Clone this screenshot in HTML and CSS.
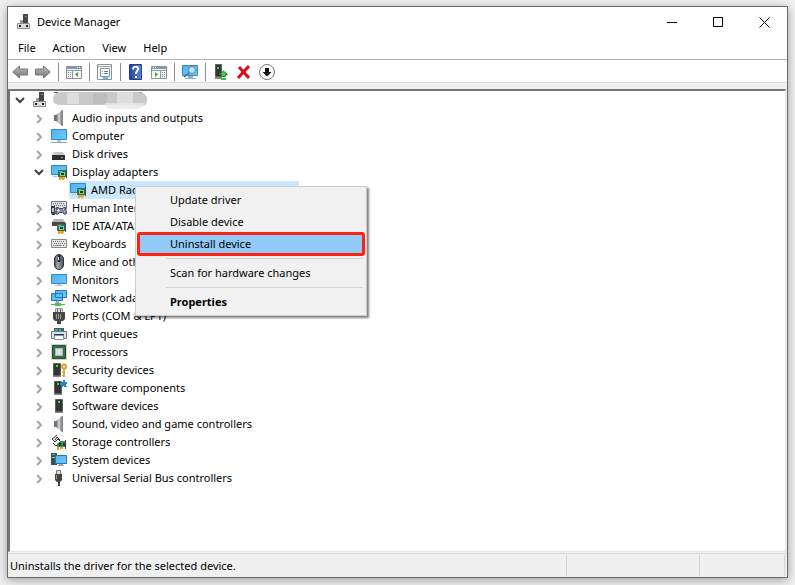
FILE: index.html
```
<!DOCTYPE html>
<html lang="en">
<head>
<meta charset="utf-8">
<title>Device Manager</title>
<link rel="stylesheet" href="styles.css">
</head>
<body>
<svg class="defs" aria-hidden="true">
  <defs>
    <linearGradient id="sky" x1="0" y1="0" x2="1" y2="1"><stop offset="0" stop-color="#4db2f5"/><stop offset="1" stop-color="#6fcaff"/></linearGradient>
    <linearGradient id="cone" x1="0" x2="1"><stop offset="0" stop-color="#666"/><stop offset=".5" stop-color="#d4d8dc"/><stop offset="1" stop-color="#777"/></linearGradient>
    <linearGradient id="arrow" x1="0" y1="0" x2="0" y2="1"><stop offset="0" stop-color="#c0c0c0"/><stop offset="1" stop-color="#747474"/></linearGradient>
    <linearGradient id="book" x1="0" x2="1"><stop offset="0" stop-color="#2342a0"/><stop offset="1" stop-color="#5d82dd"/></linearGradient>
    <linearGradient id="shell" x1="0" x2="1"><stop offset="0" stop-color="#42484e"/><stop offset=".35" stop-color="#a4abb3"/><stop offset="1" stop-color="#4a5057"/></linearGradient>
    <symbol id="i-pc" viewBox="0 0 16 16"><path fill="#474747" d="M7 0h5v9H7z"/><path fill="#34c83c" d="M9 2h2v1H9z"/><path fill="#999" d="M4 6h3v3H4z"/><path fill="#dcdcdc" stroke="#8d8d8d" d="M1.500 9.500h12v5h-12z"/><path fill="#222" d="M3 11h2v2H3zM10 11h2v2h-2z"/></symbol>
    <symbol id="i-sound" viewBox="0 0 16 16"><path fill="#6d7276" d="M3 5h3v6H3z"/><path fill="url(#cone)" d="M5 5l6-5v16l-6-5z"/><path fill="#858b91" d="M11 0h1v16h-1z"/></symbol>
    <symbol id="i-monitor" viewBox="0 0 16 16"><path fill="url(#sky)" stroke="#3688bd" d="M.5 2.500h15v9H.5z"/><path fill="#b9ccd8" d="M6 12h4v1H6zM4 13h8v1H4z"/></symbol>
    <symbol id="i-computer" viewBox="0 0 16 16"><path fill="url(#sky)" stroke="#3688bd" d="M.5 1.500h15v10H.5z"/><path fill="#b3c6d4" d="M6 12h4v2H6z"/><path fill="#87a9c1" d="M0 14h16v1H0z"/></symbol>
    <symbol id="i-disk" viewBox="0 0 16 16"><path fill="#c9c9c9" d="M3 6h9l2 4H1z"/><path fill="#303030" d="M1 9h13v5H1z"/><path fill="#36d83f" d="M10 11h2v1h-2z"/></symbol>
    <symbol id="i-card" viewBox="0 0 10 11"><path fill="#2f7255" d="M1 1h9v7H1z"/><path fill="#6aac87" d="M2 2h3v1H2z"/><path fill="#75cfa0" d="M3 3h5v4H3z"/><path fill="#193d2e" d="M4 4h3v2H4z"/><path fill="#444" d="M9 0h1v9H9z"/><path fill="#f1a21b" d="M2 8h2v3H2zM4 8h4v2H4zM5 8h2v3H5z"/></symbol>
    <symbol id="i-display" viewBox="0 0 16 16"><path fill="url(#sky)" stroke="#3688bd" d="M.5 1.500h15v9H.5z"/><path fill="#a9c7d8" d="M2 12h4v1H2z"/><use href="#i-card" x="6" y="5" width="10" height="11"/></symbol>
    <symbol id="i-hid" viewBox="0 0 16 16"><path fill="#e0e2e5" stroke="#737a83" d="M.5 1.500h15v7H.5z"/><path stroke="#646b73" stroke-dasharray="1 1" d="M2 3.500h12M3 5.500h11"/><path fill="#7b8794" stroke="#3e4955" d="M5.500 7.500h2l1 1h3l1-1h2l1 6-2 1-2-2h-3l-2 2-2-1z"/><path fill="#36414d" d="M0 6h4v9H1l-1-2z"/><path fill="#b8c4d1" d="M1 8h2v4H1z"/><path fill="#dce2ea" d="M7 9h1v3H7zM6 10h3v1H6zM12 9h1v1h-1zM13 11h1v1h-1z"/></symbol>
    <symbol id="i-ide" viewBox="0 0 16 16"><path fill="#b8b8b8" d="M3 1h9l2 3H1z"/><path fill="#494949" d="M1 4h13v4H1z"/><use href="#i-card" x="5" y="5" width="10" height="11"/></symbol>
    <symbol id="i-keyboard" viewBox="0 0 16 16"><path fill="#e6e6e6" stroke="#8a8a8a" d="M.5 3.500h15v8H.5z"/><path stroke="#737373" stroke-dasharray="1 1" d="M2 5.500h12M3 7.500h11M2 9.500h12"/><path stroke="#888" d="M5 9.500h6"/></symbol>
    <symbol id="i-mouse" viewBox="0 0 16 16"><rect x="3.500" y=".5" width="9" height="15" rx="4.500" fill="url(#shell)" stroke="#30363d"/><path stroke="#252c34" stroke-width="3" d="M8 1v7"/><path stroke="#e4e8ec" d="M7.500 3v3"/></symbol>
    <symbol id="i-network" viewBox="0 0 16 16"><path fill="url(#sky)" stroke="#2878ae" d="M4.500.5h11v7h-11zM.5 3.500h11v7H.5z"/><path fill="#9bb0bd" d="M5 11h3v2H5z"/><path fill="#4dba58" d="M0 14h14v1H0zM4 13h6v3H4z"/></symbol>
    <symbol id="i-port" viewBox="0 0 16 16"><path fill="#ddd" stroke="#999" d="M4.500.5h7v4h-7z"/><path stroke="#666" d="M6.500 1v3M9.500 1v3"/><path fill="#484848" d="M2 4h12v7l-2 2H4l-2-2z"/><path stroke="#999" d="M5.500 6v5M7.500 6v5M9.500 6v5"/><path fill="#444" d="M6 13h4v3H6z"/></symbol>
    <symbol id="i-print" viewBox="0 0 16 16"><path fill="#4f5860" d="M3 2h10v4H3z"/><path fill="#15a9dc" d="M4 3h3v2H4z"/><path fill="#38bc65" d="M8 3h2v2H8z"/><path fill="#2864c7" d="M10 3h2v2h-2z"/><path fill="#dce0e3" stroke="#707980" d="M.5 5.500h15v7H.5z"/><path fill="#30373e" d="M3 8h10v2H3z"/><path fill="#fff" stroke="#7698ac" d="M3.500 9.500h9v4h-9z"/></symbol>
    <symbol id="i-cpu" viewBox="0 0 16 16"><path fill="none" stroke="#bca36c" stroke-dasharray="1 1" d="M.5.5h15v15H.5z"/><path fill="#326c4d" stroke="#205238" d="M1.500 1.500h13v13h-13z"/><path fill="#dfdfdf" stroke="#a7bfb0" d="M4.500 4.500h7v7h-7z"/></symbol>
    <symbol id="i-tower" viewBox="0 0 16 16"><path fill="#343434" stroke="#5e5e5e" d="M4.500 1.500h7v12h-7z"/><path fill="#36e144" d="M7 3h2v2H7z"/><path fill="#858585" d="M4 14h8v1H4z"/></symbol>
    <symbol id="i-security" viewBox="0 0 16 16"><use href="#i-tower" x="-2" width="16" height="16"/><circle cx="13" cy="4.500" r="2" fill="none" stroke="#dc9e31" stroke-width="2"/><path fill="#dda340" d="M12 7h2v8h-2zM11 10h1v1h-1zM11 13h1v1h-1z"/></symbol>
    <symbol id="i-component" viewBox="0 0 16 16"><use href="#i-tower" x="-1" width="16" height="16"/><path fill="#2483d5" d="M10 2h2V0h2v2h2v2h-1v2h1v1h-3V6h-1v1h-2V5H9V3h1z"/></symbol>
    <symbol id="i-storage" viewBox="0 0 16 16"><path fill="#ededed" stroke="#333" d="M6 1L1 5l3 3 3-3 2 2"/><path fill="none" stroke="#333" d="M4 6l2-3 3 3M2 9l3 3 2-2"/><path fill="#3c8a60" d="M6 10l3-3h6v6H6z"/><path fill="#193d2e" d="M8 9h2v3H8zM12 9h2v3h-2z"/><path fill="#444" d="M14 6h1v9h-1z"/><path fill="#e4a323" d="M6 13h2v3H6zM9 13h3v2H9z"/></symbol>
    <symbol id="i-system" viewBox="0 0 16 16"><path fill="#424c54" d="M0 1h6v12H0z"/><path fill="#37d646" d="M1 2h3v1H1z"/><path fill="#adb3b7" d="M1 5h3v1H1z"/><path fill="url(#sky)" stroke="#2878ae" d="M4.500 3.500h11v8h-11z"/><path fill="#8ca8b9" d="M8 12h4v1H8zM7 13h6v1H7z"/></symbol>
    <symbol id="i-usb" viewBox="0 0 16 16"><path fill="#e1e1e1" stroke="#777" d="M5.500.5h4v4h-4z"/><path fill="#444" d="M4 4h7v6l-2 2H6l-2-2zM7 12h2v4H7z"/><path stroke="#999" d="M5.500 5v4"/></symbol>
    <symbol id="i-right" viewBox="0 0 10 10"><path fill="none" stroke="#a6a6a6" stroke-width="2" d="M3 1l4 4-4 4"/></symbol>
    <symbol id="i-down" viewBox="0 0 10 10"><path fill="none" stroke="#404040" stroke-width="2" d="M1 2l4 4 4-4"/></symbol>
    <symbol id="t-back" viewBox="0 0 16 16"><path fill="url(#arrow)" stroke="#777" d="M.7 8L7.500 2v3h8v6h-8v3z"/></symbol>
    <symbol id="t-pane" viewBox="0 0 16 16"><path fill="#f5f6f7" stroke="#8a9299" d="M.5 2.500h15v12H.5z"/><path fill="#8a96a3" d="M1 3h14v2H1z"/><path stroke="#fff" d="M11 3.500h1M13 3.500h1"/><path stroke="#929ba4" d="M1 6.500h14M6.500 7v7"/><path stroke="#748ca8" stroke-dasharray="1 1" d="M2 8.500h3M2 10.500h3M2 12.500h3"/><path fill="#3faa36" d="M12 8v5L9 10.500z"/></symbol>
    <symbol id="t-props" viewBox="0 0 16 16"><path fill="#f9fafb" stroke="#899199" d="M.5.5h14v15H.5z"/><path stroke="#9aa3ab" d="M1 2.500h13"/><path fill="#fff" stroke="#8b949d" d="M3.500 4.500h9v8h-9z"/><path stroke="#54aacc" d="M5 7.500h1M5 9.500h1"/><path stroke="#687b8b" d="M7 7.500h4M7 9.500h4"/><path stroke="#4fc3e8" stroke-width="2" d="M6 14h5"/></symbol>
    <symbol id="t-help" viewBox="0 0 14 16"><path fill="url(#book)" stroke="#203d91" d="M.5.5h12v15H.5z"/><path fill="none" stroke="#fff" stroke-width="2" d="M4 5.500C4 1.500 10 2 9 5.500 8.500 7.500 7 7 7 10M7 12v2"/></symbol>
    <symbol id="t-scan" viewBox="0 0 16 16"><path fill="url(#sky)" stroke="#3688bd" d="M.5 1.500h15v10H.5z"/><path fill="#8db1c9" d="M6 12h5v2H6zM3 14h11v1H3z"/><circle cx="10" cy="6" r="3.500" fill="#b9e6ff" stroke="#607f94"/><path stroke="#557488" stroke-width="2" d="M7 9l-5 4"/></symbol>
    <symbol id="t-update" viewBox="0 0 16 16"><path fill="#343434" stroke="#5e5e5e" d="M2.500.5h6v12h-6z"/><path fill="#36e144" d="M4 3h2v2H4z"/><path fill="#858585" d="M2 13h7v2H2z"/><path fill="#45ce50" stroke="#218d2a" d="M10.500 7l4 3.500h-2v2h-4v-2h-2z"/><path fill="#45b84c" d="M8 14h5v2H8z"/></symbol>
    <symbol id="t-delete" viewBox="0 0 16 16"><path stroke="#dc0b14" stroke-width="3" d="M3 3l10 11M13 2L2 14"/></symbol>
    <symbol id="t-disable" viewBox="0 0 16 16"><circle cx="8" cy="8" r="7.500" fill="#fff" stroke="#777"/><path fill="#111" d="M6 4h4v4h2.500L8 12.500 3.500 8H6z"/></symbol>
  </defs>
</svg>
<main class="window">
  <header class="titlebar">
    <svg class="icon"><use href="#i-pc"/></svg>
    <h1 class="title">Device Manager</h1>
    <div class="captions">
      <button class="caption" aria-label="Minimize"><svg class="glyph" viewBox="0 0 11 11"><path d="M0 5.500h10"/></svg></button>
      <button class="caption" aria-label="Maximize"><svg class="glyph" viewBox="0 0 11 11"><path d="M.5.5h9v9h-9z"/></svg></button>
      <button class="caption" aria-label="Close"><svg class="glyph" viewBox="0 0 11 11"><path d="M.5.5l10 10M10.500.5l-10 10"/></svg></button>
    </div>
  </header>
  <nav class="menubar">
    <button>File</button><button>Action</button><button>View</button><button>Help</button>
  </nav>
  <div class="toolbar" role="toolbar">
    <button aria-label="Back"><svg class="icon"><use href="#t-back"/></svg></button>
    <button aria-label="Forward"><svg class="icon flip"><use href="#t-back"/></svg></button>
    <span class="divider"></span>
    <button aria-label="Show console tree"><svg class="icon"><use href="#t-pane"/></svg></button>
    <span class="divider"></span>
    <button aria-label="Properties"><svg class="icon"><use href="#t-props"/></svg></button>
    <span class="divider"></span>
    <button aria-label="Help"><svg class="icon"><use href="#t-help"/></svg></button>
    <button aria-label="Show action pane"><svg class="icon flip"><use href="#t-pane"/></svg></button>
    <span class="divider"></span>
    <button aria-label="Scan for hardware changes"><svg class="icon"><use href="#t-scan"/></svg></button>
    <span class="divider"></span>
    <button aria-label="Update driver"><svg class="icon"><use href="#t-update"/></svg></button>
    <button aria-label="Uninstall device"><svg class="icon"><use href="#t-delete"/></svg></button>
    <button aria-label="Disable device"><svg class="icon"><use href="#t-disable"/></svg></button>
  </div>
  <section class="content">
    <ul class="tree">
      <li><div class="row root"><svg class="chev"><use href="#i-down"/></svg><svg class="icon"><use href="#i-pc"/></svg><svg class="redacted" viewBox="0 0 96 20"><path stroke="#555" d="M1 2.500h4M84 2.500h5"/><path fill="#c9c9c9" d="M7 2h78q9 0 9 8t-9 5H8Q0 15 0 9t7-7z"/><path fill="#dedede" d="M14 3h12v11H14zM64 2h16v13H64z"/><path fill="#bebebe" d="M40 3h14v11H40z"/><path fill="#e9e9e9" fill-opacity=".8" d="M52 13h40q-3 6-10 6H58q-6 0-6-6z"/></svg></div>
        <ul>
          <li class="row"><svg class="chev"><use href="#i-right"/></svg><svg class="icon"><use href="#i-sound"/></svg><span>Audio inputs and outputs</span></li>
          <li class="row"><svg class="chev"><use href="#i-right"/></svg><svg class="icon"><use href="#i-computer"/></svg><span>Computer</span></li>
          <li class="row"><svg class="chev"><use href="#i-right"/></svg><svg class="icon"><use href="#i-disk"/></svg><span>Disk drives</span></li>
          <li class="row"><svg class="chev"><use href="#i-down"/></svg><svg class="icon"><use href="#i-display"/></svg><span>Display adapters</span></li>
          <li class="row child"><div class="selected"><svg class="icon"><use href="#i-display"/></svg><span>AMD Radeon (TM) RX Vega M Graphics</span></div>
            <div class="context" role="menu">
              <button role="menuitem">Update driver</button>
              <button role="menuitem">Disable device</button>
              <button role="menuitem" class="active">Uninstall device</button>
              <hr>
              <button role="menuitem">Scan for hardware changes</button>
              <hr>
              <button role="menuitem" class="strong">Properties</button>
            </div>
          </li>
          <li class="row"><svg class="chev"><use href="#i-right"/></svg><svg class="icon"><use href="#i-hid"/></svg><span>Human Interface Devices</span></li>
          <li class="row"><svg class="chev"><use href="#i-right"/></svg><svg class="icon"><use href="#i-ide"/></svg><span>IDE ATA/ATAPI controllers</span></li>
          <li class="row"><svg class="chev"><use href="#i-right"/></svg><svg class="icon"><use href="#i-keyboard"/></svg><span>Keyboards</span></li>
          <li class="row"><svg class="chev"><use href="#i-right"/></svg><svg class="icon"><use href="#i-mouse"/></svg><span>Mice and other pointing devices</span></li>
          <li class="row"><svg class="chev"><use href="#i-right"/></svg><svg class="icon"><use href="#i-monitor"/></svg><span>Monitors</span></li>
          <li class="row"><svg class="chev"><use href="#i-right"/></svg><svg class="icon"><use href="#i-network"/></svg><span>Network adapters</span></li>
          <li class="row"><svg class="chev"><use href="#i-right"/></svg><svg class="icon"><use href="#i-port"/></svg><span>Ports (COM &amp; LPT)</span></li>
          <li class="row"><svg class="chev"><use href="#i-right"/></svg><svg class="icon"><use href="#i-print"/></svg><span>Print queues</span></li>
          <li class="row"><svg class="chev"><use href="#i-right"/></svg><svg class="icon"><use href="#i-cpu"/></svg><span>Processors</span></li>
          <li class="row"><svg class="chev"><use href="#i-right"/></svg><svg class="icon"><use href="#i-security"/></svg><span>Security devices</span></li>
          <li class="row"><svg class="chev"><use href="#i-right"/></svg><svg class="icon"><use href="#i-component"/></svg><span>Software components</span></li>
          <li class="row"><svg class="chev"><use href="#i-right"/></svg><svg class="icon"><use href="#i-tower"/></svg><span>Software devices</span></li>
          <li class="row"><svg class="chev"><use href="#i-right"/></svg><svg class="icon"><use href="#i-sound"/></svg><span>Sound, video and game controllers</span></li>
          <li class="row"><svg class="chev"><use href="#i-right"/></svg><svg class="icon"><use href="#i-storage"/></svg><span>Storage controllers</span></li>
          <li class="row"><svg class="chev"><use href="#i-right"/></svg><svg class="icon"><use href="#i-system"/></svg><span>System devices</span></li>
          <li class="row"><svg class="chev"><use href="#i-right"/></svg><svg class="icon"><use href="#i-usb"/></svg><span>Universal Serial Bus controllers</span></li>
        </ul>
      </li>
    </ul>
  </section>
  <footer class="status"><span class="message">Uninstalls the driver for the selected device.</span><span class="cell"></span><span class="cell small"></span></footer>
</main>
</body>
</html>
```
FILE: styles.css
```
* { box-sizing: border-box; }
body {
  margin: 0;
  min-height: 100vh;
  display: flex;
  padding: 6px 7px 7px;
  background: #f0f0f0;
  color: #000;
  font: 11px/18px "Noto Sans", sans-serif;
}
button {
  margin: 0;
  padding: 0;
  border: 0;
  background: none;
  color: inherit;
  font: inherit;
}
ul { list-style: none; margin: 0; padding: 0; }
svg { display: block; flex: none; }
.defs { position: absolute; width: 0; height: 0; }
.icon { width: 16px; height: 16px; }
.flip { transform: scaleX(-1); }
.window {
  flex: 1;
  min-width: 0;
  display: flex;
  flex-direction: column;
  border: 1px solid #6b6b6b;
  background: #f0f0f0;
  box-shadow: 0 2px 9px rgba(0, 0, 0, .35);
}
.titlebar, .menubar, .toolbar { background: #fff; }
.titlebar { display: flex; align-items: center; height: 30px; padding-left: 8px; }
.title { margin: 0 0 0 5px; font-size: 11px; font-weight: 400; }
.captions { display: flex; margin-left: auto; }
.caption { width: 46px; height: 30px; display: grid; place-items: center; }
.glyph { width: 11px; height: 11px; fill: none; stroke: #000; }
.menubar { display: flex; gap: 17px; height: 22px; padding-left: 10px; line-height: 22px; }
.toolbar {
  display: flex;
  align-items: center;
  height: 24px;
  padding: 2px 0 0 4px;
  border-top: 1px solid #b4b4b4;
  border-bottom: 1px solid #dadada;
  gap: 7px;
}
.divider { width: 1px; height: 18px; background: #8c8c8c; }
.content {
  flex: 1;
  margin-top: 6px;
  margin-right: 1px;
  border: 1px solid #e3e3e3;
  border-top: 2px solid #757575;
  border-left: 2px solid #757575;
  background: #fff;
}
.tree { padding-left: 5px; }
.tree ul { padding-left: 19px; }
.row { display: flex; align-items: center; height: 18px; white-space: nowrap; }
.row > span { margin-left: 5px; }
.selected > span { margin-left: 5px; }
.chev { width: 10px; height: 10px; margin: 2px 7px 0 0; }
.redacted { width: 96px; height: 20px; margin-left: 5px; }
.child { position: relative; padding-left: 35px; }
.selected {
  display: flex;
  align-items: center;
  width: 230px;
  height: 18px;
  padding-left: 1px;
  background: #cce8ff;
}
.context {
  position: absolute;
  z-index: 1;
  top: 5px;
  left: 101px;
  width: 232px;
  padding: 2px 1px;
  border: 1px solid #ccc;
  background: #f1f1f1;
  box-shadow: 2px 2px 2px rgba(0, 0, 0, .5);
}
.context button { display: block; width: 100%; height: 22px; padding-left: 33px; text-align: left; }
.context hr { height: 1px; margin: 3px 2px 3px 29px; border: 0; background: #d3d3d3; }
.context .active { height: 24px; margin: -1px 0; border: 3px solid #fe2010; border-radius: 3px; padding-left: 30px; background: #91c9f7; }
.context .strong { font-weight: 700; }
.status {
  display: flex;
  height: 24px;
  margin-top: 1px;
  padding: 1px 2px;
  border-top: 1px solid #d9d9d9;
  line-height: 22px;
}
.message { flex: 1; }
.cell { width: 133px; border-left: 1px solid #d5d5d5; }
.small { width: 86px; border-right: 1px solid #d5d5d5; }
```
